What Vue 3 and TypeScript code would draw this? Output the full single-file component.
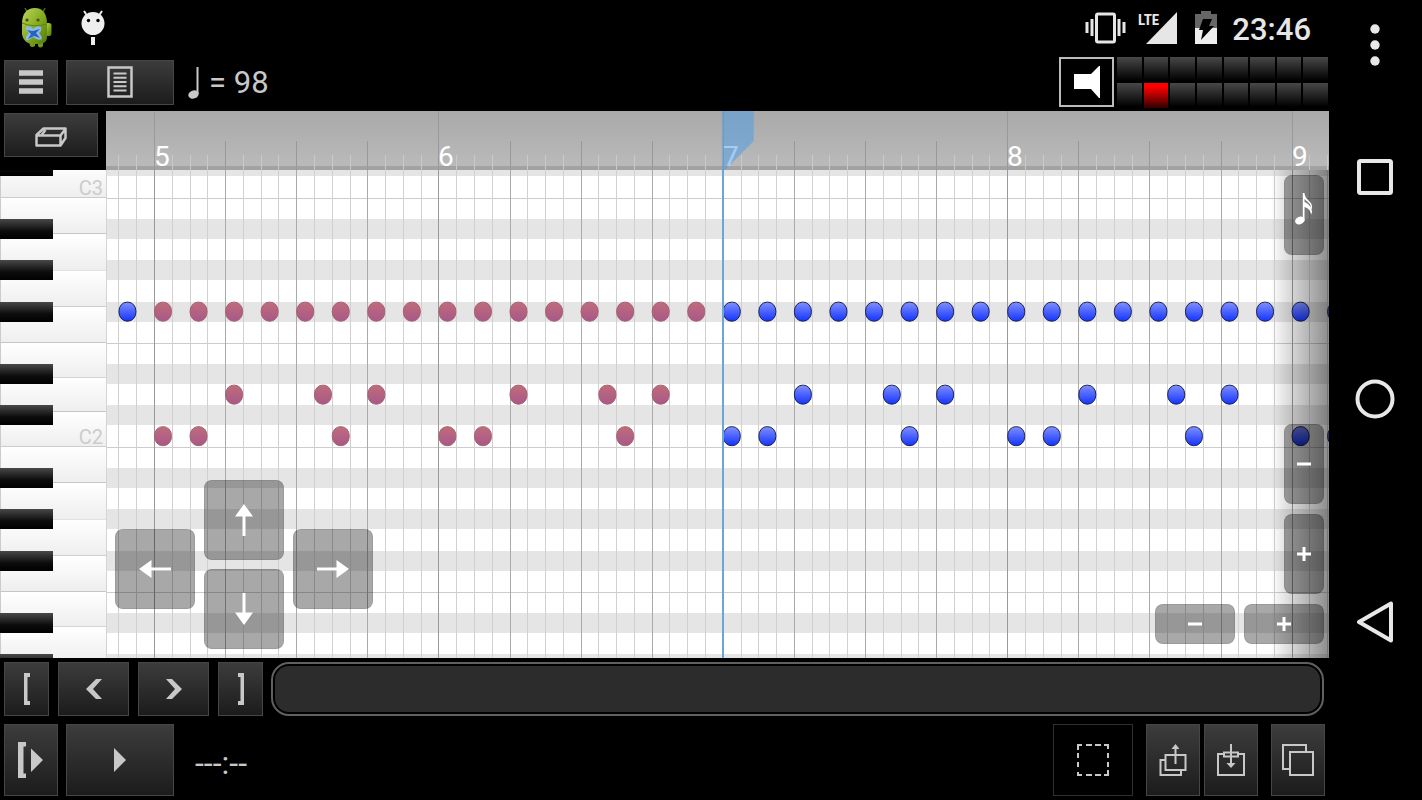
<script setup lang="ts">
import { computed, onMounted, onUnmounted, ref } from 'vue'

interface Line { x: number; kind: string }
interface RollNote { x: number; y: number; played: boolean }
interface Key { y: number; h: number }

const ORIGIN = 48
const MEASURE = 284.4
const STEP = MEASURE / 16
const ROW = 20.75
const FIRST_ROW = -13.6
const PLAYHEAD = 32

const width = ref(window.innerWidth)
const height = ref(window.innerHeight)
const resize = (): void => {
  width.value = window.innerWidth
  height.value = window.innerHeight
}
onMounted(() => window.addEventListener('resize', resize))
onUnmounted(() => window.removeEventListener('resize', resize))

const measureCount = computed(() => Math.max(1, Math.ceil((width.value - 280) / MEASURE)))

const xOf = (step: number): number => ORIGIN + step * STEP
const rowTop = (row: number): number => FIRST_ROW + row * ROW

const lines = computed<Line[]>(() => {
  const out: Line[] = []
  for (let s = -2; s < measureCount.value * 16; s++) {
    out.push({
      x: Math.round(xOf(s)),
      kind: s % 16 === 0 ? 'measure' : s % 4 === 0 ? 'beat' : 'step',
    })
  }
  return out
})

const measures = computed(() =>
  Array.from({ length: measureCount.value }, (_, i) => ({
    label: i + 5,
    x: Math.round(xOf(i * 16)),
  })),
)

// Row 0 is C#3, counting downwards one semitone at a time.
const isSharp = (row: number): boolean => [0, 3, 5, 7, 10].includes(row % 12)
const rows = Array.from({ length: 60 }, (_, i) => i)
const sharpRows = rows.filter(isSharp).map((r) => ({ y: rowTop(r) }))
const splits = rows.filter((r) => r % 12 === 2 || r % 12 === 9).map((r) => Math.round(rowTop(r)))

const whiteKeys: Key[] = [{ y: -7, h: rowTop(2) + 7 }]
for (let octave = 0; octave < 4; octave++) {
  const top = rowTop(2 + octave * 12)
  const tall = (ROW * 7) / 4
  const small = (ROW * 5) / 3
  for (let k = 0; k < 4; k++) whiteKeys.push({ y: top + k * tall, h: tall })
  for (let k = 0; k < 3; k++) whiteKeys.push({ y: top + ROW * 7 + k * small, h: small })
}
const octaves = computed(() =>
  [3, 2, 1, 0]
    .map((n, i) => ({ label: `C${n}`, y: Math.round(rowTop(2 + i * 12)) - 3 }))
    .filter((o) => o.y < height.value - 320),
)

const notes = computed<RollNote[]>(() => {
  const out: RollNote[] = []
  const addNote = (step: number, row: number): void => {
    out.push({ x: xOf(step), y: rowTop(row), played: step >= 0 && step < PLAYHEAD })
  }
  const end = measureCount.value * 16
  for (let s = -2; s < end; s += 2) addNote(s, 7)
  for (let m = 0; m < end; m += 16) {
    for (const s of [4, 9, 12]) addNote(m + s, 11)
    for (const s of [0, 2, 10]) addNote(m + s, 13)
  }
  return out
})

const meter = Array.from({ length: 16 }, (_, i) => i === 9)
const position = ref(0)
</script>

<template>
  <div class="screen">
    <main class="app">
      <header class="status">
        <svg class="droid" width="32" height="42" viewBox="0 0 32 42" aria-hidden="true">
          <defs>
            <linearGradient id="droid-body" x1="0" y1="0" x2="1" y2="1">
              <stop offset="0" stop-color="#c0d65c" />
              <stop offset="0.5" stop-color="#86ad22" />
              <stop offset="1" stop-color="#527a08" />
            </linearGradient>
          </defs>
          <path d="M4 1l2 4M24 1l-2 4" stroke="#4c6618" stroke-width="1.5" />
          <rect x="24" y="16" width="6.500" height="13" rx="2.500" fill="url(#droid-body)" />
          <path d="M8 33h6v6q-3 2-5 0zM17 33h5v6q-3 3-5 0z" fill="#71971a" />
          <path d="M1 17C1 6 6 1 14 1s12 6 12 16v13c0 5-4 7-9 7h-5C7 37 2 34 1 27z" fill="url(#droid-body)" />
          <path d="M1 16q12 5 25 1" stroke="#5f8413" fill="none" />
          <circle cx="6" cy="13" r="1.600" fill="#40550f" />
          <circle cx="17" cy="13" r="1.600" fill="#40550f" />
          <path d="M5 20q4-2 7 2 4-4 8-2 1 4-2 6 3 3 3 6-4 2-9-2-4 4-7 3-1-4 3-7-4-3-3-6z" fill="#8db9ea" />
          <path d="M6 23q4 1 6 1 3-1 7-2l-4 4 4 5-6-2-6 3 3-5z" fill="#2a63be" />
        </svg>
        <svg width="24" height="36" viewBox="0 0 24 36" aria-hidden="true">
          <path d="M3 1l4 6M21 1l-4 6" stroke="#eee" stroke-width="2" />
          <circle cx="12" cy="13.500" r="11.500" fill="#eee" />
          <circle cx="7.500" cy="10.500" r="1.700" />
          <circle cx="17" cy="10.500" r="1.700" />
          <path d="M10 27h4v8h-4z" fill="#eee" />
        </svg>
        <div class="status-right">
          <svg width="41" height="32" viewBox="0 0 41 32" aria-label="Vibrate" role="img">
            <rect x="11.500" y="2" width="18" height="28" rx="1.500" fill="none" stroke="#e6e6e6" stroke-width="3" />
            <path d="M2 10v11M7 7v17M34 7v17M39 10v11" stroke="#e6e6e6" stroke-width="3" />
          </svg>
          <svg class="signal" width="40" height="32" viewBox="0 0 40 32" aria-label="LTE signal" role="img">
            <text x="0" y="13" class="lte">LTE</text>
            <path d="M8 32L39 0v32z" fill="#e6e6e6" />
          </svg>
          <svg class="battery" width="22" height="33" viewBox="0 0 22 33" aria-label="Battery charging" role="img">
            <path d="M0 3h6V0h10v3h6v15H0z" fill="#666" />
            <path d="M0 17h22v16H0z" fill="#eee" />
            <path d="M8 8h9l-3 7h5L6 29l2-10H4z" fill="#000" />
          </svg>
          <span class="clock">23:46</span>
        </div>
      </header>

      <div class="toolbar">
        <button class="btn menu" aria-label="Menu">
          <svg width="24" height="24" viewBox="0 0 24 24"><path d="M0 3h24M0 12h24M0 21h24" stroke="#c8c8c8" stroke-width="5.500" /></svg>
        </button>
        <button class="btn tracks" aria-label="Track list">
          <svg width="26" height="32" viewBox="0 0 26 32">
            <rect x="1.500" y="1.500" width="23" height="29" fill="none" stroke="#c8c8c8" stroke-width="2.500" />
            <path d="M6.500 7.500h13M6.500 11.800h13M6.500 16h13M6.500 20.200h13M6.500 24.500h13" stroke="#c8c8c8" stroke-width="2" />
          </svg>
        </button>
        <div class="tempo">
          <svg width="12" height="34" viewBox="0 0 12 34" aria-hidden="true">
            <path d="M9.500 1v27" stroke="#c8c8c8" stroke-width="2" />
            <ellipse cx="5.500" cy="28.500" rx="5.300" ry="4" transform="rotate(-20 5.500 28.500)" fill="#c8c8c8" />
          </svg>
          <span>= 98</span>
        </div>
        <div class="levels">
          <button class="mute" aria-label="Speaker">
            <svg width="28" height="32" viewBox="0 0 28 32"><path d="M1 8h17L26 0h1v32h-1L18 23H1z" fill="#fff" /></svg>
          </button>
          <div class="meter">
            <span v-for="(hot, i) in meter" :key="i" :class="{ hot }"></span>
          </div>
        </div>
      </div>

      <section class="editor">
        <div class="side">
          <div class="side-tool">
            <button class="btn eraser" aria-label="Eraser">
              <svg width="32" height="20" viewBox="0 0 32 20">
                <path d="M1.500 8L8.500 1.500h22v9.500L25.500 18.500h-24zM1.500 8.500H25.500l5-6.500M25.500 8.500v10M6.500 8l4-5" fill="none" stroke="#c8c8c8" stroke-width="2.500" stroke-linejoin="round" />
              </svg>
            </button>
          </div>
          <div class="keyboard">
            <svg width="100%" height="100%" aria-label="Piano keys" role="img">
              <defs>
                <linearGradient id="white-key" x1="0" y1="0" x2="0" y2="1">
                  <stop offset="0" stop-color="#fff" />
                  <stop offset="1" stop-color="#eee" />
                </linearGradient>
                <linearGradient id="black-key" x1="0" y1="0" x2="0" y2="1">
                  <stop offset="0" stop-color="#484848" />
                  <stop offset="0.6" stop-color="#0c0c0c" />
                  <stop offset="1" stop-color="#000" />
                </linearGradient>
              </defs>
              <g v-for="(k, i) in whiteKeys" :key="i">
                <rect x="0" :y="k.y" width="106" :height="k.h" fill="url(#white-key)" />
                <rect x="0" :y="Math.round(k.y + k.h) - 1" width="106" height="1" fill="#c6c6c6" />
              </g>
              <path d="M.5 0v2000" stroke="#ccc" />
              <rect v-for="(r, i) in sharpRows" :key="i" x="0" :y="Math.round(r.y)" width="53" height="20" fill="url(#black-key)" />
              <text v-for="o in octaves" :key="o.label" x="103" :y="o.y" class="octave">{{ o.label }}</text>
            </svg>
          </div>
        </div>

        <div class="sheet">
          <svg class="ruler" width="100%" height="59" aria-label="Measures" role="img">
            <template v-for="(l, i) in lines" :key="i">
              <rect v-if="l.kind === 'measure'" :x="l.x" y="0" width="1" height="59" fill="#999" />
              <rect v-else-if="l.kind === 'beat'" :x="l.x" y="30" width="1" height="29" fill="#999" />
              <rect v-else :x="l.x" y="44" width="1" height="15" fill="#c9c9c9" />
            </template>
            <text v-for="m in measures" :key="m.label" :x="m.x" y="55" class="bar-number">{{ m.label }}</text>
            <path :d="`M${xOf(PLAYHEAD) - 1} 0h32v30l-29 29h-3z`" fill="#4a9cea" fill-opacity=".5" />
          </svg>

          <div class="roll">
            <svg class="grid" width="100%" height="100%" aria-label="Notes" role="img">
              <defs>
                <linearGradient id="note-new" x1="0" y1="0" x2="0" y2="1">
                  <stop offset="0" stop-color="#8090ff" />
                  <stop offset="1" stop-color="#1434ff" />
                </linearGradient>
                <linearGradient id="note-played" x1="0" y1="0" x2="0" y2="1">
                  <stop offset="0" stop-color="#bf6c7c" />
                  <stop offset="1" stop-color="#a85888" />
                </linearGradient>
              </defs>
              <rect v-for="(r, i) in sharpRows" :key="'r' + i" x="0" :y="Math.round(r.y)" width="100%" height="20" fill="#e5e5e5" />
              <rect v-for="y in splits" :key="'s' + y" x="0" :y="y" width="100%" height="1" fill="#ccc" />
              <template v-for="(l, i) in lines" :key="i">
                <rect :x="l.x" y="0" width="1" height="100%" :class="l.kind" />
              </template>
              <rect x="0" y="0" width="1" height="100%" fill="#d4d4d4" />
              <rect
                v-for="(n, i) in notes" :key="'n' + i"
                :x="n.x + 0.5" :y="n.y + 0.5" width="17" height="19" rx="8" ry="9"
                :fill="n.played ? 'url(#note-played)' : 'url(#note-new)'"
                :stroke="n.played ? '#a8606c' : '#1a2050'"
              />
              <rect :x="Math.round(xOf(PLAYHEAD)) - 1" y="0" width="2" height="100%" fill="#6ba6d6" />
            </svg>
            <div class="edge"></div>

            <div class="dpad">
              <button class="pad" aria-label="Left"><svg width="32" height="18" viewBox="0 0 32 18"><path d="M0 9L12.500 0v7.500H32v3H12.500V18z" /></svg></button>
              <div class="dpad-column">
                <button class="pad" aria-label="Up"><svg width="18" height="32" viewBox="0 0 18 32"><path d="M9 0l9 12.500h-7.500V32h-3V12.500H0z" /></svg></button>
                <button class="pad" aria-label="Down"><svg width="18" height="32" viewBox="0 0 18 32"><path d="M9 32l9-12.500h-7.500V0h-3v19.500H0z" /></svg></button>
              </div>
              <button class="pad" aria-label="Right"><svg width="32" height="18" viewBox="0 0 32 18"><path d="M32 9L19.500 0v7.500H0v3h19.500V18z" /></svg></button>
            </div>

            <button class="pad tall note-length" aria-label="Note length">
              <svg width="18" height="32" viewBox="0 0 18 32">
                <ellipse cx="4.800" cy="27.500" rx="4.800" ry="3.800" transform="rotate(-20 4.800 27.500)" />
                <path d="M7.800 0h1.700c.5 5 3 6 5.500 9 2 2.500 2.500 4 1.500 8 1 1 .5 3-.5 4.500-.5-4.500-3-6.500-6.500-7.500v14H7.800zM9.500 6v3c3 1.200 5 3 6.300 5.500C16 11 13 9.500 9.500 6z" fill-rule="evenodd" />
              </svg>
            </button>
            <div class="zoom">
              <button class="pad tall" aria-label="Zoom out vertically"><svg width="14" height="14" viewBox="0 0 14 14"><path d="M0 5.500h14v3H0z" /></svg></button>
              <button class="pad tall" aria-label="Zoom in vertically"><svg width="14" height="14" viewBox="0 0 14 14"><path d="M0 5.500h5.500V0h3v5.500H14v3H8.500V14h-3V8.500H0z" /></svg></button>
              <div class="zoom-row">
                <button class="pad wide" aria-label="Zoom out horizontally"><svg width="14" height="14" viewBox="0 0 14 14"><path d="M0 5.500h14v3H0z" /></svg></button>
                <button class="pad wide" aria-label="Zoom in horizontally"><svg width="14" height="14" viewBox="0 0 14 14"><path d="M0 5.500h5.500V0h3v5.500H14v3H8.500V14h-3V8.500H0z" /></svg></button>
              </div>
            </div>
          </div>
        </div>
      </section>

      <div class="locate">
        <button class="btn bracket" aria-label="Go to start"><svg width="6" height="32" viewBox="0 0 6 32"><path d="M6 0v4H3.500v24H6v4H0V0z" fill="#c8c8c8" /></svg></button>
        <button class="btn step-btn" aria-label="Previous"><svg width="16" height="20" viewBox="0 0 16 20"><path d="M10 0h6L7 10l9 10h-6L0 10z" fill="#c8c8c8" /></svg></button>
        <button class="btn step-btn" aria-label="Next"><svg width="16" height="20" viewBox="0 0 16 20"><path d="M6 0H0l9 10L0 20h6l10-10z" fill="#c8c8c8" /></svg></button>
        <button class="btn bracket" aria-label="Go to end"><svg width="6" height="32" viewBox="0 0 6 32"><path d="M0 0v4h2.500v24H0v4h6V0z" fill="#c8c8c8" /></svg></button>
        <input v-model="position" class="seek" type="range" min="0" max="100" aria-label="Song position" />
      </div>

      <footer class="transport">
        <button class="btn play-start" aria-label="Play from start">
          <svg width="26" height="36" viewBox="0 0 26 36"><path d="M8 0v4.500H5.500v27H8V36H0V0zM13 6.500L25 18 13 30z" fill="#c8c8c8" /></svg>
        </button>
        <button class="btn play" aria-label="Play"><svg width="12" height="24" viewBox="0 0 12 24"><path d="M0 0l12 12L0 24z" fill="#c8c8c8" /></svg></button>
        <span class="time">---:--</span>
        <div class="edit">
          <button class="btn select" aria-label="Select range">
            <svg width="32" height="32" viewBox="0 0 32 32"><path d="M1 6V1h4M9 1h6M18 1h6M27 1h4v4M31 9v5M31 18v5M31 26v5h-4M24 31h-6M15 31H9M5 31H1v-3M1 23v-5M1 14V9" fill="none" stroke="#c8c8c8" stroke-width="2" /></svg>
          </button>
          <button class="btn square" aria-label="Cut">
            <svg width="28" height="32" viewBox="0 0 28 32">
              <path d="M6.500 11h20v15h-20zM6 16H1.500v15H22v-4.500M16.500 20V4" fill="none" stroke="#c8c8c8" stroke-width="2" />
              <path d="M16.500 0l4 5h-8z" fill="#c8c8c8" />
            </svg>
          </button>
          <button class="btn square" aria-label="Paste">
            <svg width="28" height="32" viewBox="0 0 28 32">
              <path d="M7 10H1v21h26V10h-6M7 8.500h14v4H7zM14 0v20" fill="none" stroke="#c8c8c8" stroke-width="2" />
              <path d="M14 24l-4.500-5h9z" fill="#c8c8c8" />
            </svg>
          </button>
          <button class="btn square copy" aria-label="Copy">
            <svg width="32" height="32" viewBox="0 0 32 32"><path d="M8 8h23v23H8zM8 25H1V1h23v7" fill="none" stroke="#c8c8c8" stroke-width="2" /></svg>
          </button>
        </div>
      </footer>
    </main>

    <nav class="system">
      <button class="more" aria-label="More options">
        <svg width="10" height="42" viewBox="0 0 10 42"><g fill="#e8e8e8"><circle cx="5" cy="5" r="4.700" /><circle cx="5" cy="21" r="4.700" /><circle cx="5" cy="37" r="4.700" /></g></svg>
      </button>
      <button aria-label="Recent apps"><svg width="36" height="36" viewBox="0 0 36 36"><rect x="2" y="2" width="32" height="32" rx="1.500" fill="none" stroke="#e8e8e8" stroke-width="4" /></svg></button>
      <button aria-label="Home"><svg width="40" height="40" viewBox="0 0 40 40"><circle cx="20" cy="20" r="17.500" fill="none" stroke="#e8e8e8" stroke-width="4" /></svg></button>
      <button aria-label="Back"><svg width="36" height="42" viewBox="0 0 36 42"><path d="M34 2.500v37L2 21z" fill="none" stroke="#e8e8e8" stroke-width="4" stroke-linejoin="round" /></svg></button>
    </nav>
  </div>
</template>

<style>
body {
  background: #000;
}
</style>

<style scoped>
.screen {
  display: flex;
  min-height: 100vh;
  background: #000;
  color: #c8c8c8;
  font-family: Roboto, "Noto Sans", sans-serif;
}
.screen svg {
  display: block;
}
.app {
  flex: 1;
  min-width: 0;
  display: flex;
  flex-direction: column;
}
button {
  display: flex;
  align-items: center;
  justify-content: center;
  box-sizing: border-box;
  margin: 0;
  padding: 0;
  border: 0;
  background: none;
  flex-shrink: 0;
}
.btn {
  border: 1px solid #464646;
  background: linear-gradient(#3c3c3c, #1c1c1c);
}

.status {
  display: flex;
  align-items: center;
  gap: 28px;
  height: 55px;
  padding: 0 18px 0 21px;
}
.status-right {
  display: flex;
  align-items: center;
  margin-left: auto;
}
.signal {
  margin: 0 17px 0 12px;
}
.lte {
  font: bold 15px "Roboto Condensed", Roboto, sans-serif;
  fill: #e6e6e6;
}
.clock {
  margin-left: 15px;
  padding-top: 4px;
  font-size: 31px;
  font-weight: 500;
  line-height: 36px;
  color: #e6e6e6;
}

.toolbar {
  display: flex;
  align-items: center;
  height: 54px;
  margin-bottom: 2px;
  padding-left: 4px;
  gap: 8px;
}
.menu {
  width: 54px;
  height: 45px;
}
.tracks {
  width: 108px;
  height: 45px;
}
.tempo {
  display: flex;
  align-items: center;
  gap: 9px;
  padding: 2px 0 0 6px;
  font-size: 31px;
  line-height: 36px;
}
.levels {
  display: flex;
  align-items: center;
  gap: 3px;
  margin-left: auto;
}
.mute {
  width: 55px;
  height: 50px;
  border: 2px solid #bbb;
}
.meter {
  display: grid;
  grid-template-columns: repeat(8, 1fr);
  grid-auto-rows: 25px;
  gap: 1px 2px;
  width: 211px;
  padding-right: 1px;
}
.meter span {
  background: linear-gradient(#484848, #000 95%);
}
.meter .hot {
  background: linear-gradient(#f00 15%, #300);
}

.editor {
  flex: 1;
  display: flex;
}
.side {
  display: flex;
  flex-direction: column;
  width: 106px;
}
.side-tool {
  height: 59px;
  padding: 2px 0 0 4px;
  box-sizing: border-box;
}
.eraser {
  width: 94px;
  height: 44px;
  padding-top: 4px;
}
.keyboard {
  flex: 1;
  min-height: 487px;
  position: relative;
  background: #fff;
  overflow: hidden;
}
.keyboard svg,
.grid {
  position: absolute;
  inset: 0;
}
.octave {
  font-size: 20px;
  text-anchor: end;
  fill: #ccc;
}
.sheet {
  flex: 1;
  min-width: 0;
  display: flex;
  flex-direction: column;
  overflow: hidden;
}
.ruler {
  overflow: visible;
  background: linear-gradient(#a9a9a9, #bababa 55px, #a2a2a2 55px);
}
.bar-number {
  font-size: 28px;
  fill: #fff;
}
.roll {
  flex: 1;
  position: relative;
  overflow: hidden;
  background: #fff;
}
.measure {
  fill: #999;
}
.beat {
  fill: #aaa;
}
.step {
  fill: #d0d0d0;
}
.edge {
  position: absolute;
  inset: 0 0 0 auto;
  width: 58px;
  background: linear-gradient(to right, transparent, rgba(0, 0, 0, 0.45));
}
.pad {
  width: 80px;
  height: 80px;
  border: 1px solid rgba(0, 0, 0, 0.08);
  border-radius: 8px;
  background: rgba(0, 0, 0, 0.34);
}
.pad svg {
  fill: #fff;
}
.dpad {
  position: absolute;
  left: 9px;
  bottom: 9px;
  display: flex;
  align-items: flex-end;
  gap: 9px;
}
.dpad > .pad {
  margin-bottom: 40px;
}
.dpad-column {
  display: flex;
  flex-direction: column;
  gap: 9px;
}
.tall {
  width: 40px;
}
.wide {
  height: 40px;
}
.note-length {
  position: absolute;
  top: 5px;
  right: 5px;
  padding-bottom: 12px;
}
.zoom {
  position: absolute;
  right: 5px;
  bottom: 14px;
  display: flex;
  flex-direction: column;
  align-items: flex-end;
  gap: 10px;
}
.zoom-row {
  display: flex;
  gap: 9px;
}

.locate {
  display: flex;
  gap: 9px;
  height: 54px;
  padding: 4px 5px 0 4px;
}
.bracket {
  width: 45px;
}
.step-btn {
  width: 71px;
}
.seek {
  appearance: none;
  flex: 1;
  min-width: 0;
  margin: 0 0 0 -1px;
  padding: 2px;
  box-sizing: border-box;
  border: 2px solid #606060;
  border-radius: 18px;
  background: #2c2c2c content-box;
}
.seek::-webkit-slider-thumb {
  appearance: none;
  width: 1px;
  height: 1px;
}

.transport {
  display: flex;
  align-items: stretch;
  gap: 8px;
  height: 72px;
  padding: 8px 4px 4px;
}
.play-start {
  width: 54px;
}
.play {
  width: 108px;
}
.time {
  align-self: center;
  padding: 6px 0 0 13px;
  font-size: 32px;
  line-height: 36px;
}
.edit {
  display: flex;
  gap: 4px;
  margin-left: auto;
}
.select {
  width: 80px;
  margin-right: 9px;
  border-color: #303030;
  background: #000;
}
.square {
  width: 54px;
}
.copy {
  margin-left: 9px;
}

.system {
  display: flex;
  flex-direction: column;
  box-sizing: border-box;
  width: 93px;
  padding: 0 1px 67px 0;
}
.system button {
  flex: 1;
}
.system .more {
  flex: 0 0 66px;
  align-items: flex-end;
}
</style>
